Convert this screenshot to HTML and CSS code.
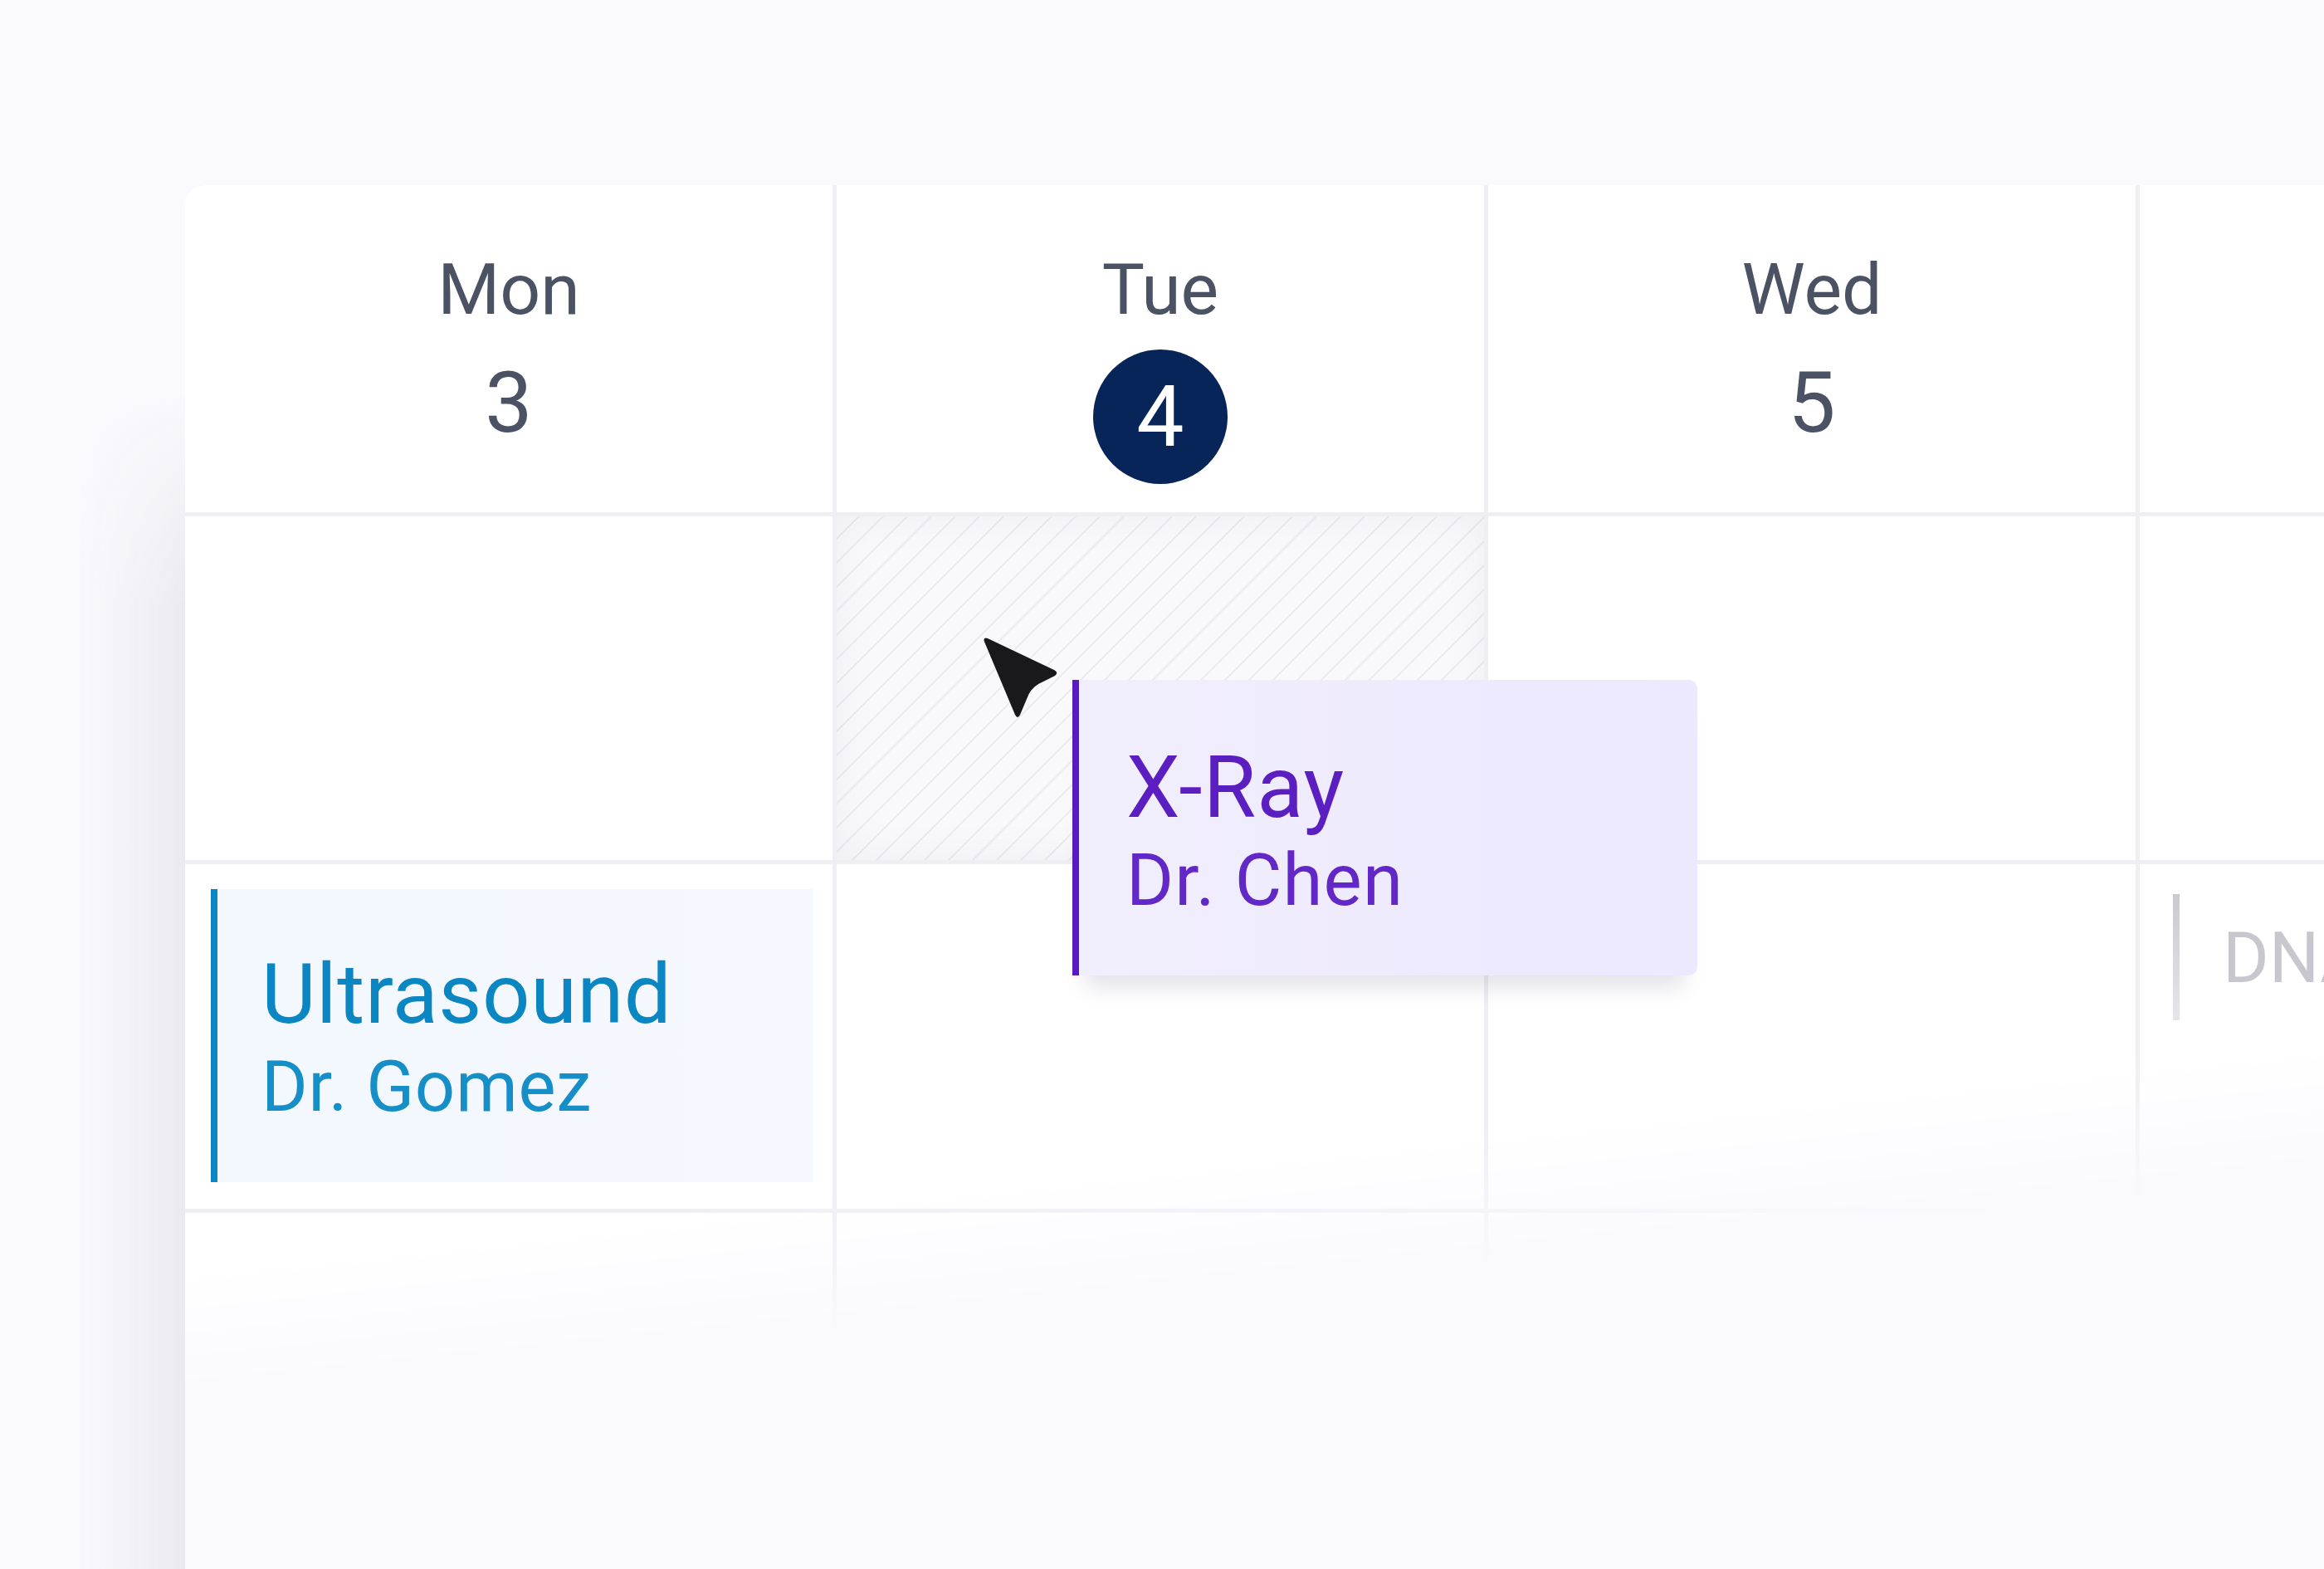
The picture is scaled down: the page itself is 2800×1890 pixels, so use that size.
FILE: index.html
```html
<!DOCTYPE html>
<html lang="en">
<head>
<meta charset="utf-8">
<title>Week calendar</title>
<link rel="stylesheet" href="styles.css">
</head>
<body>
<div class="stage">
  <div class="calendar">
    <div class="head"><span class="day-name">Mon</span><span class="day-num">3</span></div>
    <div class="head"><span class="day-name">Tue</span><span class="day-num today">4</span></div>
    <div class="head"><span class="day-name">Wed</span><span class="day-num">5</span></div>
    <div class="head"></div>

    <div class="cell"></div>
    <div class="cell cell--blocked"></div>
    <div class="cell"></div>
    <div class="cell"></div>

    <div class="cell cell--pad">
      <div class="event event--sky">
        <span class="event-title">Ultrasound</span>
        <span class="event-doc">Dr. Gomez</span>
      </div>
    </div>
    <div class="cell"></div>
    <div class="cell"></div>
    <div class="cell cell--ghost">
      <div class="event event--ghost">
        <span class="event-ghost-title">DNA</span>
      </div>
    </div>

    <div class="cell"></div>
    <div class="cell"></div>
    <div class="cell"></div>
    <div class="cell"></div>
  </div>

  <div class="event event--drag">
    <span class="event-title">X-Ray</span>
    <span class="event-doc">Dr. Chen</span>
  </div>

  <svg class="cursor" viewBox="0 0 100 110" width="100" height="110" aria-hidden="true">
    <path d="M10 9 L90 47 Q96 50 91 54 L71 64 Q61 70 57 82 L49 101 Q46 107 43 101 L6 13 Q4 7 10 9 Z" fill="#19181d"/>
  </svg>
</div>
</body>
</html>
```

FILE: styles.css
```css
* {
  box-sizing: border-box;
  margin: 0;
  padding: 0;
}

html, body {
  width: 2800px;
  height: 1890px;
}

body {
  background: #faf9fe;
  font-family: Roboto, "Liberation Sans", Arial, sans-serif;
  overflow: hidden;
}

.stage {
  position: relative;
  width: 2800px;
  height: 1890px;
  padding: 223px 0 0 223px;
  overflow: hidden;
}

/* soft shadow along the left edge of the calendar card */
.stage::before {
  content: "";
  position: absolute;
  left: 92px;
  top: 470px;
  width: 131px;
  height: 1420px;
  background: linear-gradient(to right, rgba(250, 249, 254, 0), rgba(236, 235, 241, 0.7) 70%, #eae9ef);
  -webkit-mask-image: linear-gradient(to bottom, transparent, #000 260px);
  mask-image: linear-gradient(to bottom, transparent, #000 260px);
}

.calendar {
  display: grid;
  grid-template-columns: repeat(4, 780px);
  grid-template-rows: 394px 414px 415px 415px;
  gap: 5px;
  width: max-content;
  background: #efeef3;
  border-top-left-radius: 24px;
  overflow: hidden;
  -webkit-mask-image: linear-gradient(174deg, #000 1290px, transparent 1460px);
  mask-image: linear-gradient(174deg, #000 1290px, transparent 1460px);
}

.head {
  background: #fff;
  display: flex;
  flex-direction: column;
  align-items: center;
  padding-top: 83px;
  color: #4a5264;
}

.day-name {
  font-size: 86px;
  line-height: 86px;
}

.day-num {
  font-size: 102px;
  line-height: 102px;
  margin-top: 42px;
}

.day-num.today {
  margin-top: 29px;
  width: 162px;
  height: 162px;
  border-radius: 50%;
  background: #08255a;
  color: #fff;
  display: flex;
  align-items: center;
  justify-content: center;
}

.cell {
  background: #fff;
}

.cell--blocked {
  background:
    repeating-linear-gradient(135deg, rgba(236, 235, 241, 0) 0 18px, #ecebf1 18px 20.5px),
    #f9f8fb;
  box-shadow: inset 0 0 50px rgba(120, 110, 150, 0.08);
}

.cell--pad {
  padding: 30px 24px 32px 31px;
}

.cell--ghost {
  padding: 36px 0 0 40px;
}

.event {
  display: flex;
  flex-direction: column;
  border-left: 8px solid;
  height: 353px;
  padding: 71px 40px 0 53px;
  white-space: nowrap;
}

.event-title {
  font-size: 101px;
  line-height: 111px;
  letter-spacing: 0.6px;
}

.event-doc {
  font-size: 85px;
  line-height: 94px;
  margin-top: 9px;
  letter-spacing: 0.8px;
}

.event--sky {
  background: linear-gradient(90deg, #f3f7fe, #f5f8fe);
  border-left-color: #0a87c2;
  color: #0a87c2;
}

.event--sky .event-doc {
  color: #168fc8;
}

.event--drag {
  position: absolute;
  left: 1292px;
  top: 819px;
  width: 753px;
  height: 356px;
  padding: 74px 40px 0 57px;
  background: linear-gradient(90deg, #f1eefd, #ece8fe);
  border-left-color: #5b19c1;
  border-radius: 0 10px 10px 0;
  color: #5a1ec1;
  box-shadow: 0 30px 24px -16px rgba(40, 30, 70, 0.13);
}

.event--drag .event-title {
  font-size: 103px;
  letter-spacing: 1px;
}

.event--drag .event-doc {
  font-size: 87px;
  color: #6228c7;
  letter-spacing: 1.2px;
}

.event--ghost {
  height: 152px;
  padding: 35px 0 0 52px;
  border-left: 8px solid;
  border-image: linear-gradient(#cac9cf, #e6e5ea) 1;
  color: #c8c7cd;
}

.event-ghost-title {
  font-size: 85px;
  line-height: 85px;
}

.cursor {
  position: absolute;
  left: 1180px;
  top: 760px;
}
```
